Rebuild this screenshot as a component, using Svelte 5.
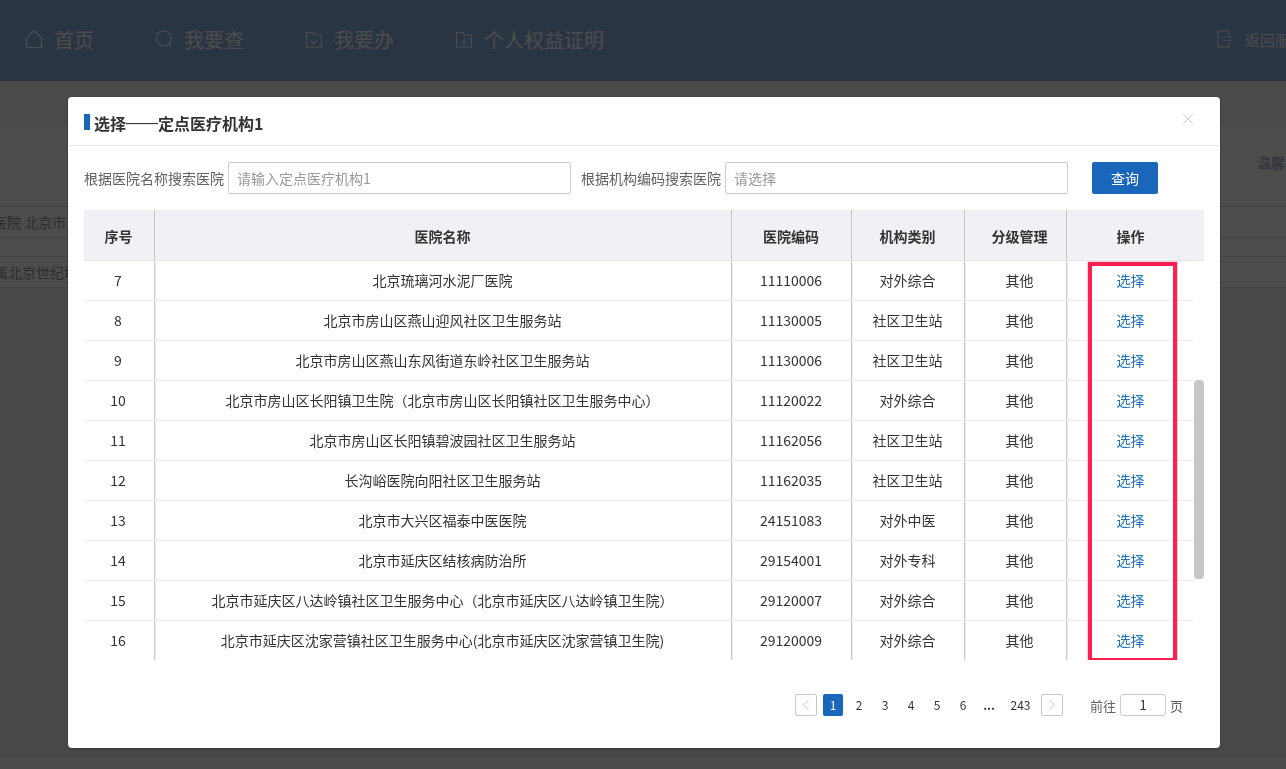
<script lang="ts">
	const navItems = [
		{ label: '首页', icon: 'home' },
		{ label: '我要查', icon: 'search' },
		{ label: '我要办', icon: 'check' },
		{ label: '个人权益证明', icon: 'plus' }
	];

	const rows = [
		[7, '北京琉璃河水泥厂医院', '11110006', '对外综合', '其他'],
		[8, '北京市房山区燕山迎风社区卫生服务站', '11130005', '社区卫生站', '其他'],
		[9, '北京市房山区燕山东风街道东岭社区卫生服务站', '11130006', '社区卫生站', '其他'],
		[10, '北京市房山区长阳镇卫生院（北京市房山区长阳镇社区卫生服务中心）', '11120022', '对外综合', '其他'],
		[11, '北京市房山区长阳镇碧波园社区卫生服务站', '11162056', '社区卫生站', '其他'],
		[12, '长沟峪医院向阳社区卫生服务站', '11162035', '社区卫生站', '其他'],
		[13, '北京市大兴区福泰中医医院', '24151083', '对外中医', '其他'],
		[14, '北京市延庆区结核病防治所', '29154001', '对外专科', '其他'],
		[15, '北京市延庆区八达岭镇社区卫生服务中心（北京市延庆区八达岭镇卫生院）', '29120007', '对外综合', '其他'],
		[16, '北京市延庆区沈家营镇社区卫生服务中心(北京市延庆区沈家营镇卫生院)', '29120009', '对外综合', '其他']
	];

	const pages = ['1', '2', '3', '4', '5', '6', '...', '243'];
</script>

<div class="page">
	<header class="nav">
		{#each navItems as item}
			<div class="nav-item">
				<svg width="20" height="20" viewBox="0 0 20 20" fill="none" stroke="currentColor" stroke-width="1.200">
					{#if item.icon === 'home'}
						<path d="M2.500 9 10 1.500 17.500 9v9.500h-15z" stroke-linejoin="round" />
					{:else if item.icon === 'search'}
						<circle cx="9.500" cy="9.500" r="7.500" /><path d="m15 15.500 2.500 2.500" />
					{:else if item.icon === 'check'}
						<path d="M2.500 3.500h6l2 2.500h7v12h-15z" /><path d="m7 12 2.500 2.300 3.800-3.600" />
					{:else}
						<path d="M2.500 3.500h6l2 2.500h7v12h-15z" /><path d="M10 9v7M6.500 12.500h7" />
					{/if}
				</svg>
				<span>{item.label}</span>
			</div>
		{/each}
		<div class="nav-back">
			<svg width="16" height="18" viewBox="0 0 16 18" fill="none" stroke="currentColor" stroke-width="1.100">
				<path d="M12 5V1H1v16h11v-4M6 7h8l-2-1.500M6 10.500h8" />
			</svg>
			<span>返回服务大厅</span>
		</div>
	</header>
	<div class="strip"></div>
	<main class="content">
		<div class="notice">温馨提示</div>
		<div class="bg-row"><span class="bg-a">定点医院 北京市</span></div>
		<div class="bg-row"><span class="bg-b">直属北京世纪坛医院</span></div>
	</main>
	<footer class="foot"></footer>
</div>

<div class="overlay">
	<section class="dialog">
		<div class="dialog-head">
			<h2><span class="mark"></span>选择<span class="dash">——</span>定点医疗机构1</h2>
			<svg class="close" width="12" height="12" viewBox="0 0 12 12" stroke="#c5d0de" stroke-width="1" fill="none">
				<path d="M1 1l10 10M11 1 1 11" />
			</svg>
		</div>

		<div class="filters">
			<label for="hname">根据医院名称搜索医院</label>
			<input id="hname" placeholder="请输入定点医疗机构1" />
			<label for="hcode" class="second">根据机构编码搜索医院</label>
			<input id="hcode" placeholder="请选择" />
			<button class="query">查询</button>
		</div>

		<div class="table">
			<div class="row head">
				<div>序号</div>
				<div>医院名称</div>
				<div>医院编码</div>
				<div>机构类别</div>
				<div class="level">分级管理</div>
				<div class="ops">操作</div>
			</div>
			<div class="body">
				{#each rows as r}
					<div class="row item">
						<div class="seq">{r[0]}</div>
						<div>{r[1]}</div>
						<div>{r[2]}</div>
						<div>{r[3]}</div>
						<div class="level">{r[4]}</div>
						<div class="pick">选择</div>
					</div>
				{/each}
				<div class="thumb"></div>
				<div class="highlight"></div>
			</div>
		</div>

		<div class="pager">
			<button class="arrow" aria-label="上一页">
				<svg width="8" height="12" viewBox="0 0 8 12" fill="none" stroke="#c0c4cc"><path d="M6.500 1 1.500 6l5 5" /></svg>
			</button>
			<div class="pages">
				{#each pages as p, i}
					<span class="num" class:on={i === 0} class:dots={p === '...'}>{p}</span>
				{/each}
			</div>
			<button class="arrow" aria-label="下一页">
				<svg width="8" height="12" viewBox="0 0 8 12" fill="none" stroke="#c0c4cc"><path d="M1.500 1l5 5-5 5" /></svg>
			</button>
			<span class="goto">前往</span>
			<input class="jump" value="1" />
			<span class="unit">页</span>
		</div>
	</section>
</div>

<style>
	:global(body) {
		margin: 0;
		overflow: hidden;
		font-family: "Noto Sans CJK SC", "Noto Sans", sans-serif;
	}

	.page {
		height: 769px;
		background: #f2f2f2;
		color: #333;
		overflow: hidden;
		display: flex;
		flex-direction: column;
	}

	.nav {
		height: 81px;
		flex: none;
		background: #8cb1df;
		display: flex;
		align-items: center;
		padding: 0 0 3px 24px;
		box-sizing: border-box;
		color: #fff;
		font-size: 20px;
	}

	.nav-item {
		display: flex;
		align-items: center;
		gap: 10px;
		margin-right: 60px;
	}

	.nav-back {
		margin-left: auto;
		display: flex;
		align-items: center;
		gap: 12px;
		font-size: 15px;
		white-space: nowrap;
		margin-right: -49px;
	}

	.strip {
		height: 42px;
		flex: none;
		background: #f8f8f8;
	}

	.content {
		height: 165px;
		flex: none;
		background: #fff;
		padding-top: 83px;
		box-sizing: border-box;
		font-size: 14px;
		color: #999;
		white-space: nowrap;
	}

	.foot {
		height: 12px;
		flex: none;
		margin-top: auto;
		background: #fbfbfb;
	}

	.notice {
		position: absolute;
		top: 152px;
		left: 1257px;
		color: #9aaac4;
	}

	.bg-row {
		height: 32px;
		box-sizing: border-box;
		border-top: 1px solid #ddd;
		border-bottom: 1px solid #ddd;
		margin-bottom: 18px;
		line-height: 31px;
		overflow: hidden;
	}

	.bg-a { margin-left: -35px; }
	.bg-b { margin-left: -20px; }

	.overlay {
		position: fixed;
		inset: 0;
		background: rgba(0, 0, 0, 0.7);
	}

	.dialog {
		position: absolute;
		left: 68px;
		top: 97px;
		width: 1152px;
		height: 651px;
		background: #fff;
		border-radius: 4px;
		box-shadow: 0 1px 3px rgba(0, 0, 0, 0.3);
		color: #333;
		font-size: 14px;
	}

	.dialog-head {
		height: 48px;
		border-bottom: 1px solid #e6e6e6;
		display: flex;
		align-items: center;
		justify-content: space-between;
		padding: 0 26px 0 16px;
	}

	h2 {
		margin: 4px 0 0;
		font-size: 16px;
		font-weight: 700;
		display: flex;
		align-items: center;
		line-height: 24px;
	}

	.dash {
		font-family: "Liberation Sans", sans-serif;
		font-weight: 400;
	}

	.mark {
		width: 6px;
		height: 16px;
		background: #1a66ba;
		margin-right: 4px;
		margin-top: -2px;
	}

	.close { margin-top: -4px; }

	.filters {
		display: flex;
		align-items: center;
		padding: 16px 16px 0;
		height: 32px;
	}

	.filters label {
		color: #606266;
		white-space: nowrap;
		margin-right: 4px;
	}

	.filters .second { margin-left: 10px; }

	.filters input {
		width: 343px;
		height: 32px;
		box-sizing: border-box;
		border: 1px solid #ccc;
		border-radius: 2px;
		padding: 0 8px;
		font: inherit;
		outline: none;
	}

	.filters input::placeholder { color: #999; }

	.query {
		width: 66px;
		height: 32px;
		margin-left: 24px;
		background: #1a66ba;
		color: #fff;
		border: none;
		border-radius: 2px;
		font: inherit;
	}

	.table {
		margin: 16px 16px 0;
	}

	.row {
		display: grid;
		grid-template-columns: 71px 577px 120px 113px 102px 1fr;
		text-align: center;
	}

	.row > div {
		display: flex;
		align-items: center;
		justify-content: center;
		box-sizing: border-box;
		padding-right: 1px;
		border-right: 1px solid #c8c8c8;
		box-shadow: 1px 0 0 #f0f0f0;
	}

	.row > div:last-child {
		border-right: none;
		box-shadow: none;
		padding-right: 0;
	}

	.row > .seq { padding-right: 2px; }

	.row > .level { padding-left: 8px; padding-right: 0; }

	.head {
		height: 51px;
		background: #f0f1f5;
		border-bottom: 1px solid #e6e6e6;
		box-sizing: border-box;
		font-weight: 700;
	}

	.head > div { padding-top: 2px; }

	.row.head > .ops { padding-right: 10px; }

	.body {
		position: relative;
		height: 399px;
		overflow: hidden;
	}

	.item {
		height: 40px;
		box-sizing: border-box;
		border-bottom: 1px solid #ededed;
		margin-right: 10px;
	}

	.item > div { padding-bottom: 2px; }

	.row > .pick { color: #2070c4; padding-right: 2px; }

	.thumb {
		position: absolute;
		right: 0;
		top: 119px;
		width: 10px;
		height: 199px;
		border-radius: 4px;
		background: #c6c7cb;
	}

	.highlight {
		position: absolute;
		left: 1004px;
		top: 1px;
		width: 89px;
		height: 400px;
		box-sizing: border-box;
		border: 4px solid #ff1f50;
		box-shadow: 0 0 0 1px rgba(255, 31, 80, 0.2);
	}

	.pager {
		display: flex;
		align-items: center;
		padding: 34px 0 0 727px;
		font-size: 12px;
	}

	.arrow {
		width: 22px;
		height: 22px;
		padding: 0;
		background: #fff;
		border: 1px solid #c8c8c8;
		border-radius: 2px;
		display: flex;
		align-items: center;
		justify-content: center;
	}

	.pages {
		display: flex;
		margin: 0 5px 0 6px;
	}

	.num {
		min-width: 20px;
		height: 22px;
		line-height: 22px;
		text-align: center;
		margin-right: 6px;
	}

	.num:last-child { margin-right: 0; min-width: 31px; }

	.num.on {
		background: #1a66ba;
		color: #fff;
		border-radius: 2px;
	}

	.num.dots { font-weight: 700; }

	.goto {
		margin-left: 27px;
		color: #606266;
		font-size: 13px;
	}

	.jump {
		width: 46px;
		height: 22px;
		box-sizing: border-box;
		margin: 0 4px;
		border: 1px solid #ccc;
		border-radius: 3px;
		text-align: center;
		font: inherit;
		font-size: 13px;
		color: #333;
		padding: 0 0 2px;
	}

	.unit {
		color: #606266;
		font-size: 13px;
	}
</style>
